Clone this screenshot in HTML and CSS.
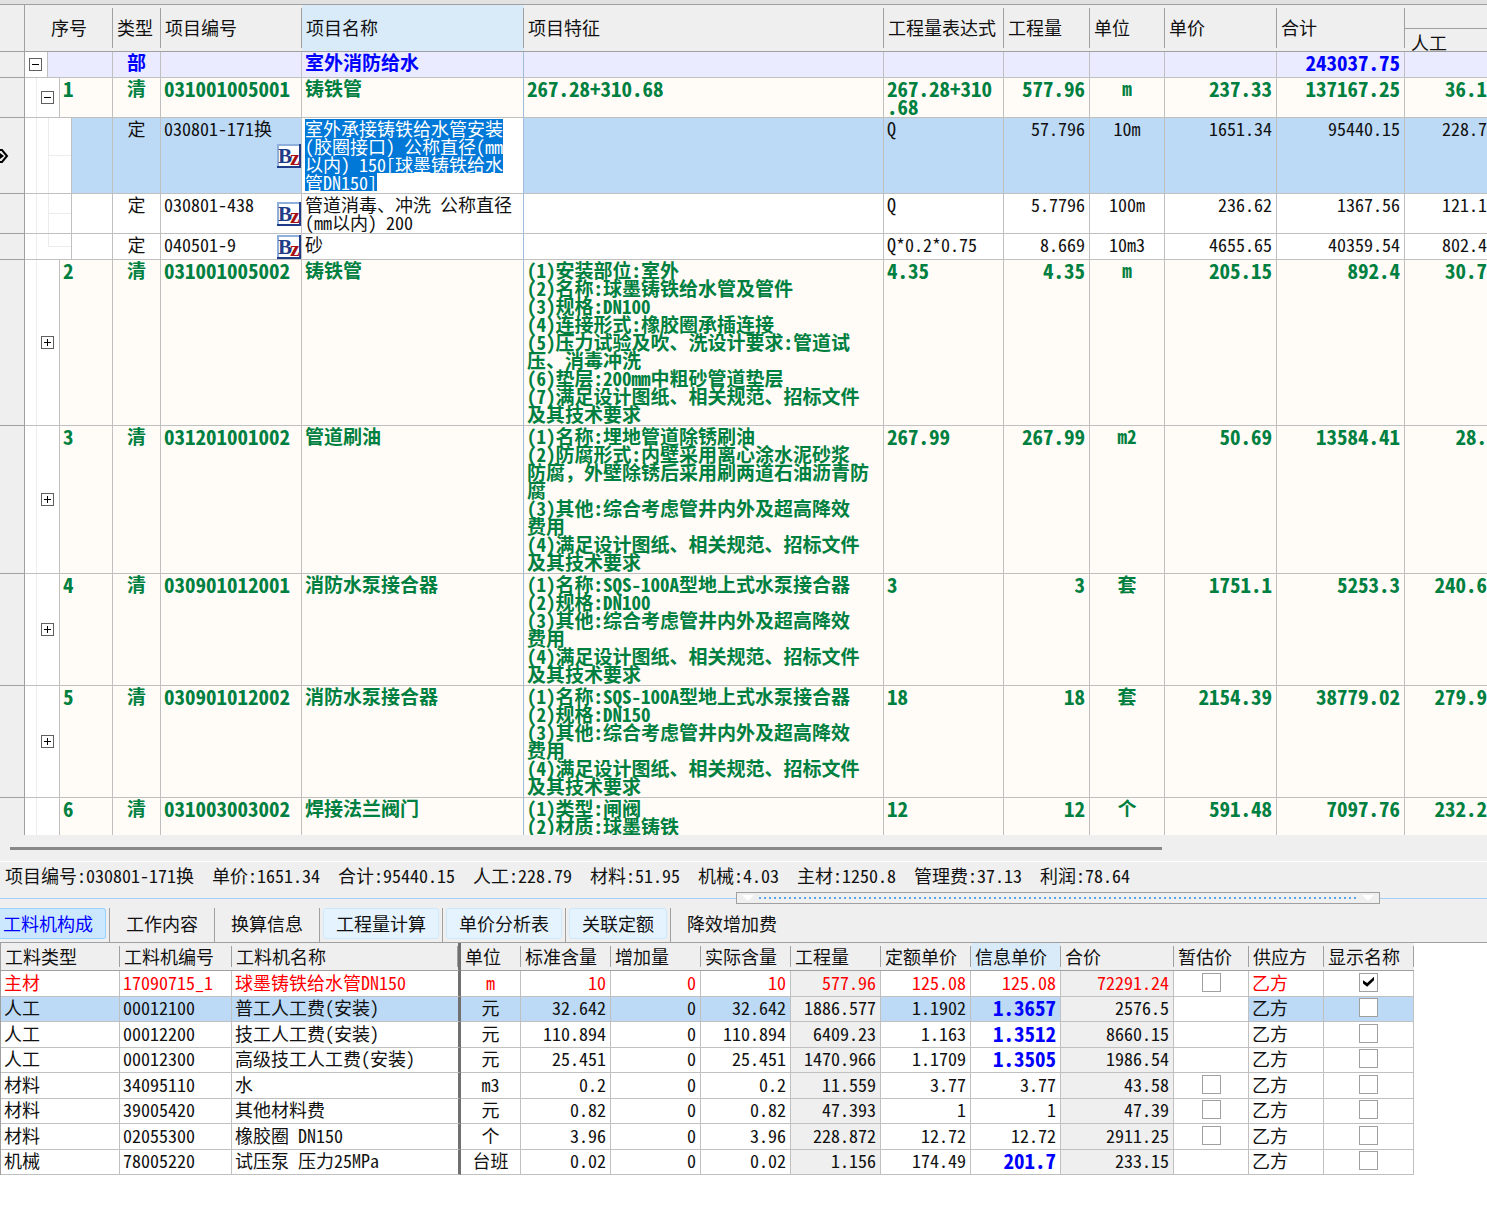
FILE: index.html
```html
<!DOCTYPE html>
<html lang="zh-CN">
<head>
<meta charset="utf-8">
<title>工程量清单计价</title>
<link rel="stylesheet" href="styles.css">
</head>
<body>
<svg width="0" height="0" class="defs" aria-hidden="true">
  <symbol id="bz" viewBox="0 0 24 24">
    <rect x="1" y="1" width="22" height="22" fill="#fff" stroke="#1f3c88" stroke-width="2"/>
    <path d="M1 22V1H22" fill="none" stroke="#8fb0dc" stroke-width="2"/>
    <text x="1" y="19" font-family="Liberation Serif, serif" font-size="21" font-weight="bold" fill="#1f3c88">B</text>
    <text x="13" y="21" font-family="Liberation Serif, serif" font-size="22" font-weight="bold" fill="#a80f14">z</text>
  </symbol>
</svg>
<main class="app">
  <section class="bill">
    <table class="grid bill-grid">
      <colgroup>
        <col class="w-gutter"><col class="w-tree1"><col class="w-tree2"><col class="w-tree3"><col class="w-seq">
        <col class="w-type"><col class="w-code"><col class="w-icon"><col class="w-name"><col class="w-spec">
        <col class="w-expr"><col class="w-qty"><col class="w-unit"><col class="w-price"><col class="w-total"><col>
      </colgroup>
      <thead>
        <tr class="head-top">
          <th rowspan="2" class="gutter"></th>
          <th rowspan="2" colspan="4" class="center">序号</th>
          <th rowspan="2">类型</th>
          <th rowspan="2" colspan="2">项目编号</th>
          <th rowspan="2" class="current">项目名称</th>
          <th rowspan="2">项目特征</th>
          <th rowspan="2">工程量表达式</th>
          <th rowspan="2">工程量</th>
          <th rowspan="2">单位</th>
          <th rowspan="2">单价</th>
          <th rowspan="2">合计</th>
          <th class="group"></th>
        </tr>
        <tr class="head-sub"><th class="sub"><div class="sub-label">人工</div></th></tr>
      </thead>
      <tbody>
        <tr class="part">
          <td class="gutter"></td>
          <td class="tree t1"><button class="toggle" aria-label="折叠"></button></td>
          <td colspan="3"></td><td class="center">部</td><td colspan="2"></td><td class="name">室外消防给水</td>
          <td></td><td></td><td></td><td></td><td></td><td class="num">243037.75</td><td class="cut"></td>
        </tr>
        <tr class="item">
          <td class="gutter"></td>
          <td colspan="2" class="tree t2"><button class="toggle" aria-label="折叠"></button></td>
          <td colspan="2" class="code">1</td><td class="center">清</td><td colspan="2" class="code">031001005001</td><td class="name">铸铁管</td>
          <td class="code">267.28+310.68</td><td class="code">267.28+310<br>.68</td><td class="num">577.96</td><td class="center">m</td><td class="num">237.33</td><td class="num">137167.25</td><td class="cut">36.1</td>
        </tr>
        <tr class="quota selected">
          <td class="gutter"><svg class="pointer" width="9" height="16" viewBox="0 0 9 16"><path d="M0 2L2 2L7 8L2 14H0" fill="none" stroke="#000" stroke-width="2"/><path d="M0 5L4 8L0 11Z" fill="#000"/></svg></td>
          <td colspan="3" class="tree t3"></td>
          <td></td><td class="center">定</td><td class="noline">030801-171换</td><td class="icon"><svg width="24" height="24"><use href="#bz"/></svg></td>
          <td class="name editing"><mark>室外承接铸铁给水管安装</mark><mark>(胶圈接口) 公称直径(mm</mark><mark>以内) 150[球墨铸铁给水</mark><mark>管DN150]</mark></td>
          <td></td><td>Q</td><td class="num">57.796</td><td class="center">10m</td><td class="num">1651.34</td><td class="num">95440.15</td><td class="cut">228.7</td>
        </tr>
        <tr class="quota">
          <td class="gutter"></td>
          <td colspan="3" class="tree t3"></td>
          <td></td><td class="center">定</td><td class="noline">030801-438</td><td class="icon"><svg width="24" height="24"><use href="#bz"/></svg></td>
          <td class="name">管道消毒、冲洗 公称直径<br>(mm以内) 200</td>
          <td></td><td>Q</td><td class="num">5.7796</td><td class="center">100m</td><td class="num">236.62</td><td class="num">1367.56</td><td class="cut">121.1</td>
        </tr>
        <tr class="quota">
          <td class="gutter"></td>
          <td colspan="3" class="tree t3 last"></td>
          <td></td><td class="center">定</td><td class="noline">040501-9</td><td class="icon"><svg width="24" height="24"><use href="#bz"/></svg></td>
          <td class="name">砂</td>
          <td></td><td>Q*0.2*0.75</td><td class="num">8.669</td><td class="center">10m3</td><td class="num">4655.65</td><td class="num">40359.54</td><td class="cut">802.4</td>
        </tr>
        <tr class="item">
          <td class="gutter"></td>
          <td colspan="2" class="tree t2"><button class="toggle plus" aria-label="展开"></button></td>
          <td colspan="2" class="code">2</td><td class="center">清</td><td colspan="2" class="code">031001005002</td><td class="name">铸铁管</td>
          <td>(1)安装部位:室外<br>(2)名称:球墨铸铁给水管及管件<br>(3)规格:DN100<br>(4)连接形式:橡胶圈承插连接<br>(5)压力试验及吹、洗设计要求:管道试<br>压、消毒冲洗<br>(6)垫层:200mm中粗砂管道垫层<br>(7)满足设计图纸、相关规范、招标文件<br>及其技术要求</td>
          <td class="code">4.35</td><td class="num">4.35</td><td class="center">m</td><td class="num">205.15</td><td class="num">892.4</td><td class="cut">30.7</td>
        </tr>
        <tr class="item">
          <td class="gutter"></td>
          <td colspan="2" class="tree t2"><button class="toggle plus" aria-label="展开"></button></td>
          <td colspan="2" class="code">3</td><td class="center">清</td><td colspan="2" class="code">031201001002</td><td class="name">管道刷油</td>
          <td>(1)名称:埋地管道除锈刷油<br>(2)防腐形式:内壁采用离心涂水泥砂浆<br>防腐<span class="full">，</span>外壁除锈后采用刷两道石油沥青防<br>腐<br>(3)其他:综合考虑管井内外及超高降效<br>费用<br>(4)满足设计图纸、相关规范、招标文件<br>及其技术要求</td>
          <td class="code">267.99</td><td class="num">267.99</td><td class="center">m2</td><td class="num">50.69</td><td class="num">13584.41</td><td class="cut">28.</td>
        </tr>
        <tr class="item">
          <td class="gutter"></td>
          <td colspan="2" class="tree t2"><button class="toggle plus" aria-label="展开"></button></td>
          <td colspan="2" class="code">4</td><td class="center">清</td><td colspan="2" class="code">030901012001</td><td class="name">消防水泵接合器</td>
          <td>(1)名称:SQS-100A型地上式水泵接合器<br>(2)规格:DN100<br>(3)其他:综合考虑管井内外及超高降效<br>费用<br>(4)满足设计图纸、相关规范、招标文件<br>及其技术要求</td>
          <td class="code">3</td><td class="num">3</td><td class="center">套</td><td class="num">1751.1</td><td class="num">5253.3</td><td class="cut">240.6</td>
        </tr>
        <tr class="item">
          <td class="gutter"></td>
          <td colspan="2" class="tree t2"><button class="toggle plus" aria-label="展开"></button></td>
          <td colspan="2" class="code">5</td><td class="center">清</td><td colspan="2" class="code">030901012002</td><td class="name">消防水泵接合器</td>
          <td>(1)名称:SQS-100A型地上式水泵接合器<br>(2)规格:DN150<br>(3)其他:综合考虑管井内外及超高降效<br>费用<br>(4)满足设计图纸、相关规范、招标文件<br>及其技术要求</td>
          <td class="code">18</td><td class="num">18</td><td class="center">套</td><td class="num">2154.39</td><td class="num">38779.02</td><td class="cut">279.9</td>
        </tr>
        <tr class="item partial">
          <td class="gutter"></td>
          <td colspan="2" class="tree t2"></td>
          <td colspan="2" class="code">6</td><td class="center">清</td><td colspan="2" class="code">031003003002</td><td class="name">焊接法兰阀门</td>
          <td>(1)类型:闸阀<br>(2)材质:球墨铸铁</td>
          <td class="code">12</td><td class="num">12</td><td class="center">个</td><td class="num">591.48</td><td class="num">7097.76</td><td class="cut">232.2</td>
        </tr>
      </tbody>
    </table>
  </section>

  <div class="hscroll"><div class="thumb"></div></div>

  <div class="summary">
    <span>项目编号:030801-171换</span><span>单价:1651.34</span><span>合计:95440.15</span><span>人工:228.79</span><span>材料:51.95</span><span>机械:4.03</span><span>主材:1250.8</span><span>管理费:37.13</span><span>利润:78.64</span>
  </div>

  <div class="splitter">
    <div class="line"></div>
    <div class="handle"><i class="tri"></i><i class="dots"></i><i class="tri"></i></div>
    <div class="line"></div>
  </div>

  <nav class="tabs">
    <div class="tab first"><button class="active">工料机构成</button></div>
    <div class="tab"><button>工作内容</button></div>
    <div class="tab"><button>换算信息</button></div>
    <div class="tab"><button class="filled">工程量计算</button></div>
    <div class="tab"><button class="filled">单价分析表</button></div>
    <div class="tab"><button class="filled">关联定额</button></div>
    <div class="tab"><button>降效增加费</button></div>
  </nav>

  <section class="resources">
    <table class="grid res-grid">
      <colgroup>
        <col class="r-type"><col class="r-code"><col class="r-name"><col class="r-unit"><col class="r-val"><col class="r-val"><col class="r-val"><col class="r-val"><col class="r-val"><col class="r-val"><col class="r-total"><col class="r-flag"><col class="r-flag"><col class="r-val">
      </colgroup>
      <thead>
        <tr><th>工料类型</th><th>工料机编号</th><th class="frozen">工料机名称</th><th>单位</th><th>标准含量</th><th>增加量</th><th>实际含量</th><th>工程量</th><th>定额单价</th><th class="current">信息单价</th><th>合价</th><th>暂估价</th><th>供应方</th><th>显示名称</th></tr>
      </thead>
      <tbody>
        <tr class="main-mat"><td>主材</td><td>17090715_1</td><td class="frozen">球墨铸铁给水管DN150</td><td class="center">m</td><td class="num">10</td><td class="num">0</td><td class="num">10</td><td class="num ro">577.96</td><td class="num">125.08</td><td class="num">125.08</td><td class="num ro">72291.24</td><td class="center"><input type="checkbox" aria-label="暂估价"></td><td>乙方</td><td class="center"><input type="checkbox" aria-label="显示名称" checked></td></tr>
        <tr class="selected"><td>人工</td><td>00012100</td><td class="frozen">普工人工费(安装)</td><td class="center">元</td><td class="num">32.642</td><td class="num">0</td><td class="num">32.642</td><td class="num ro">1886.577</td><td class="num">1.1902</td><td class="num changed">1.3657</td><td class="num ro">2576.5</td><td class="blank"></td><td>乙方</td><td class="center"><input type="checkbox" aria-label="显示名称"></td></tr>
        <tr><td>人工</td><td>00012200</td><td class="frozen">技工人工费(安装)</td><td class="center">元</td><td class="num">110.894</td><td class="num">0</td><td class="num">110.894</td><td class="num ro">6409.23</td><td class="num">1.163</td><td class="num changed">1.3512</td><td class="num ro">8660.15</td><td></td><td>乙方</td><td class="center"><input type="checkbox" aria-label="显示名称"></td></tr>
        <tr><td>人工</td><td>00012300</td><td class="frozen">高级技工人工费(安装)</td><td class="center">元</td><td class="num">25.451</td><td class="num">0</td><td class="num">25.451</td><td class="num ro">1470.966</td><td class="num">1.1709</td><td class="num changed">1.3505</td><td class="num ro">1986.54</td><td></td><td>乙方</td><td class="center"><input type="checkbox" aria-label="显示名称"></td></tr>
        <tr><td>材料</td><td>34095110</td><td class="frozen">水</td><td class="center">m3</td><td class="num">0.2</td><td class="num">0</td><td class="num">0.2</td><td class="num ro">11.559</td><td class="num">3.77</td><td class="num">3.77</td><td class="num ro">43.58</td><td class="center"><input type="checkbox" aria-label="暂估价"></td><td>乙方</td><td class="center"><input type="checkbox" aria-label="显示名称"></td></tr>
        <tr><td>材料</td><td>39005420</td><td class="frozen">其他材料费</td><td class="center">元</td><td class="num">0.82</td><td class="num">0</td><td class="num">0.82</td><td class="num ro">47.393</td><td class="num">1</td><td class="num">1</td><td class="num ro">47.39</td><td class="center"><input type="checkbox" aria-label="暂估价"></td><td>乙方</td><td class="center"><input type="checkbox" aria-label="显示名称"></td></tr>
        <tr><td>材料</td><td>02055300</td><td class="frozen">橡胶圈 DN150</td><td class="center">个</td><td class="num">3.96</td><td class="num">0</td><td class="num">3.96</td><td class="num ro">228.872</td><td class="num">12.72</td><td class="num">12.72</td><td class="num ro">2911.25</td><td class="center"><input type="checkbox" aria-label="暂估价"></td><td>乙方</td><td class="center"><input type="checkbox" aria-label="显示名称"></td></tr>
        <tr><td>机械</td><td>78005220</td><td class="frozen">试压泵 压力25MPa</td><td class="center">台班</td><td class="num">0.02</td><td class="num">0</td><td class="num">0.02</td><td class="num ro">1.156</td><td class="num">174.49</td><td class="num changed">201.7</td><td class="num ro">233.15</td><td></td><td>乙方</td><td class="center"><input type="checkbox" aria-label="显示名称"></td></tr>
      </tbody>
    </table>
  </section>
</main>
</body>
</html>
```
FILE: styles.css
```css
* { box-sizing: border-box; }

body {
  margin: 0;
  background: #fff;
  color: #111;
  font: 18px/18px "Noto Sans CJK SC", sans-serif;
  font-feature-settings: "hwid";
}

.defs { position: absolute; }
.full { font-feature-settings: normal; }

.app {
  display: flex;
  flex-direction: column;
  height: 100vh;
  overflow: hidden;
}

/* shared grid look */
.grid {
  border-collapse: separate;
  border-spacing: 0;
  table-layout: fixed;
}
.grid th, .grid td {
  padding: 1px 3px 2px;
  border: 0 solid #c0c0c0;
  border-width: 0 1px 1px 0;
  text-align: left;
  vertical-align: top;
  white-space: nowrap;
}
.grid th {
  padding: 0 4px 2px;
  border-right: 0;
  border-bottom-color: #a0a0a0;
  background: linear-gradient(#a0a0a0, #a0a0a0) right center / 1px calc(100% - 6px) no-repeat #efefef;
  font-weight: normal;
  vertical-align: middle;
}
.grid th.current { background-color: #d9ebf9; }
.grid .center { text-align: center; }
.grid .num { text-align: right; padding-right: 4px; }
.grid .selected td { background-color: #bcdaf6; }

/* upper grid */
.bill {
  flex: 1 1 0;
  min-height: 0;
  overflow: hidden;
  border-top: 4px solid #e1e1e1;
}
.bill-grid { width: 100%; border-top: 1px solid #a0a0a0; }
.w-gutter { width: 25px; }
.w-tree1 { width: 23px; }
.w-tree2 { width: 12px; }
.w-tree3 { width: 12px; }
.w-seq { width: 41px; }
.w-type { width: 48px; }
.w-code { width: 116px; }
.w-icon { width: 25px; }
.w-name { width: 222px; }
.w-spec { width: 360px; }
.w-expr { width: 120px; }
.w-qty { width: 86px; }
.w-unit { width: 75px; }
.w-price { width: 112px; }
.w-total { width: 128px; }

.head-top { height: 24px; }
.head-sub { height: 23px; }
.bill-grid th.group { background: #efefef; }
.bill-grid th.sub { background: #efefef; vertical-align: bottom; padding: 0 0 0 6px; }
.sub-label { height: 20px; line-height: 22px; overflow: hidden; }

.bill-grid tbody tr { height: 26px; }
.bill-grid .gutter { background: #efefef; border-color: #a0a0a0; border-right: 1px solid #a0a0a0; padding: 0; vertical-align: middle; }
.bill-grid .selected .gutter { background: #efefef; }
.pointer { display: block; }
.bill-grid td.name { border-right-color: #a0bcd8; }
.bill-grid td.noline { border-right: 0; }
.bill-grid td.icon { padding: 0; vertical-align: middle; }
.icon svg { display: block; }
.bill-grid td.cut { padding-right: 0; text-align: right; border-right: 0; }

.part td { background: #ebebff; color: #00f; font-weight: bold; font-size: 19px; }
.item td { background: #fffcf7; color: #008040; font-weight: bold; font-size: 19px; }
.part .num, .item .num, .item .code, .item .cut { font-size: 21px; }
.bill-grid tr.partial { height: 112px; }

.bill-grid .selected td.editing { background: #fff; }
mark { display: block; width: fit-content; height: 18px; background: #0078d7; color: #fff; }

/* outline column: faint connector lines at each nesting level */
.bill-grid td.tree {
  background: linear-gradient(#ececec, #ececec) 11px 0 / 1px 100% no-repeat #fff;
  padding: 0 5px 0 0;
  text-align: right;
  vertical-align: middle;
}
.bill-grid td.t1 { background: #fff; }
.bill-grid td.t3, .bill-grid .selected td.t3 {
  background:
    linear-gradient(#ececec, #ececec) 11px 0 / 1px 100% no-repeat,
    linear-gradient(#ececec, #ececec) 23px 0 / 1px 100% no-repeat,
    linear-gradient(#ececec, #ececec) 23px 50% / 24px 1px no-repeat #fff;
}
.bill-grid td.t3.last {
  background:
    linear-gradient(#ececec, #ececec) 11px 0 / 1px 100% no-repeat,
    linear-gradient(#ececec, #ececec) 23px 0 / 1px 50% no-repeat,
    linear-gradient(#ececec, #ececec) 23px 50% / 24px 1px no-repeat #fff;
}
.toggle {
  display: block;
  width: 13px;
  height: 13px;
  margin: 0 0 0 auto;
  padding: 0;
  border: 1px solid #606060;
  background: linear-gradient(#000, #000) center / 7px 1px no-repeat #fff;
}
.toggle.plus {
  background:
    linear-gradient(#000, #000) center / 7px 1px no-repeat,
    linear-gradient(#000, #000) center / 1px 7px no-repeat #fff;
}

/* scroll track */
.hscroll {
  padding: 12px 0 11px 10px;
  background: #efefef;
  border-bottom: 1px solid #fff;
}
.thumb { width: 78%; height: 3px; background: #888; }

.summary {
  display: flex;
  gap: 18px;
  padding: 4px 5px 8px;
  background: #efefef;
  white-space: nowrap;
}

.splitter {
  display: grid;
  grid-template-columns: 736fr 644fr 107fr;
  align-items: center;
  background: #efefef;
}
.line { height: 1px; background: #a6cdf5; }
.handle {
  display: flex;
  align-items: center;
  gap: 5px;
  height: 12px;
  padding: 0 5px;
  border: 1px solid #a0a0a0;
}
.tri { border: 6px solid transparent; border-top-color: #fff; border-bottom: 0; }
.dots { flex: 1; height: 2px; background: repeating-linear-gradient(90deg, #5aa5e8 0 2px, transparent 2px 5px); }

.tabs {
  display: flex;
  padding-top: 4px;
  background: #efefef;
  border-bottom: 1px solid #a0a0a0;
}
.tab { height: 34px; padding: 0 3px; border-right: 1px solid #a0a0a0; }
.tab.first { padding-left: 0; }
.tab:last-child { border-right: 0; }
.tab button {
  height: 31px;
  padding: 0 12px 2px;
  border: 1px solid transparent;
  border-radius: 3px;
  background: none;
  color: #111;
  font: inherit;
  white-space: nowrap;
}
.tab button.filled { background: #e5f3ff; border-color: #cce8ff; }
.tab button.active { padding-left: 3px; border-color: #99d1ff; border-left: 0; border-radius: 0 3px 3px 0; background: #cce8ff; color: #00f; }

/* lower grid */
.resources { padding-bottom: 57px; overflow: hidden; }
.res-grid { width: 1414px; height: 232px; border-left: 1px solid #a0a0a0; }
.r-type { width: 119px; }
.r-code { width: 112px; }
.r-name { width: 229px; }
.r-unit { width: 60px; }
.r-val { width: 90px; }
.r-total { width: 113px; }
.r-flag { width: 75px; }
.res-grid thead tr { height: 28px; }
.res-grid tbody tr { height: 25px; }
.res-grid td { padding: 0 3px 3px; vertical-align: middle; }
.grid th.frozen, .grid td.frozen { border-right: 3px solid #707070; }
.res-grid td.ro { background: #efefef; }
.res-grid .selected td.blank { background: #fff; }
.main-mat td { color: #f00; }
.res-grid .changed { color: #00f; font-weight: bold; font-size: 21px; }

input[type="checkbox"] {
  appearance: none;
  display: block;
  width: 19px;
  height: 19px;
  margin: 1px auto 0;
  border: 1px solid #a0a0a0;
  background: #fff;
}
input[type="checkbox"]:checked::after {
  content: "";
  display: block;
  width: 11px;
  height: 10px;
  margin: 3px;
  background: #000;
  clip-path: polygon(0 35%, 38% 62%, 100% 0, 100% 35%, 38% 100%, 0 68%);
}
```
